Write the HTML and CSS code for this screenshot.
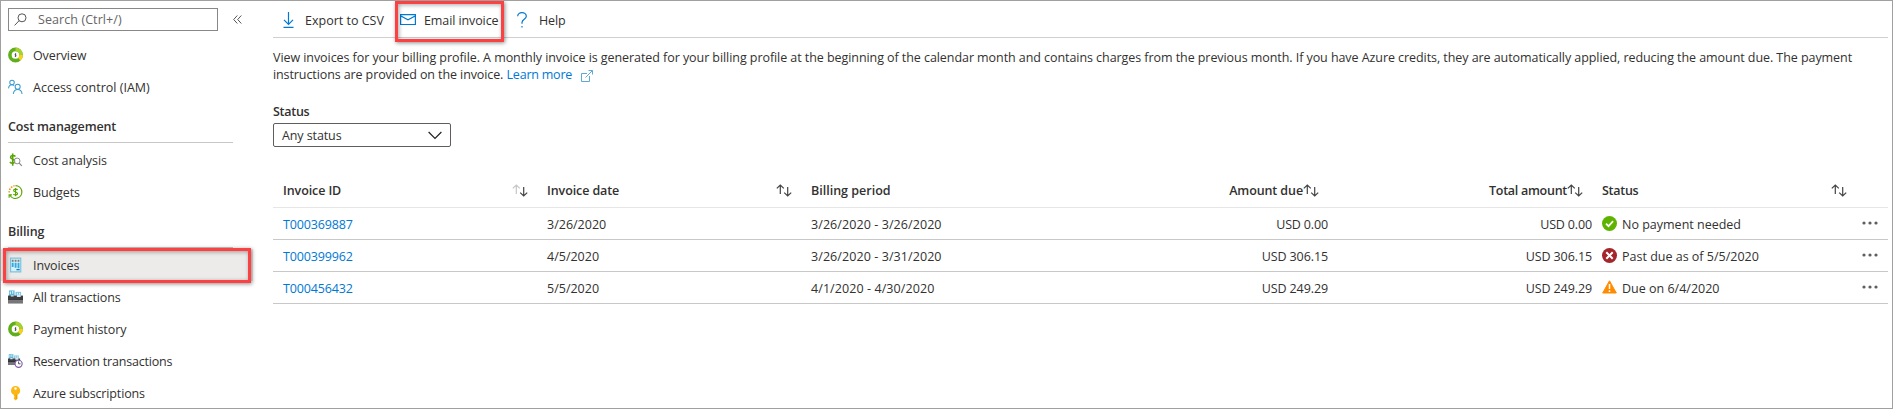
FILE: index.html
```
<!DOCTYPE html>
<html lang="en">
<head>
<meta charset="utf-8">
<title>Invoices</title>
<link rel="stylesheet" href="styles.css">
</head>
<body>
<svg class="defs" aria-hidden="true">
  <symbol id="ring" viewBox="0 0 16 16"><circle cx="8" cy="8" r="6" fill="#fff" stroke="#5fae1b" stroke-width="3.800"/><path d="M8 2A6 6 0 0 1 14 8" fill="none" stroke="#a4d22e" stroke-width="3.800"/><path d="M14 8a6 6 0 0 1-2 4.500" fill="none" stroke="#fcd116" stroke-width="3.800"/><path d="M8 6v4.200M8.900 6.900H7.600v1.200h1v1.200H7.100" fill="none" stroke="#333" stroke-width=".6"/></symbol>
  <symbol id="register" viewBox="0 0 16 16"><path d="M1 1h6v6H1z" fill="#59b4d9"/><path d="M8 2.500h6v5H8z" fill="#7cc4e4"/><path d="M2.500 2v3M5 1.500v3M10 3.500v2M12.300 3.500v2" stroke="#dff3fb" stroke-width="1.200"/><path d="M0 6.500h16V11H0z" fill="#3e3e42"/><path d="M9.500 5.500h4v2.500h-4zM3 6h3v1.500H3z" fill="#cfe9f5"/><path d="M0 11.500h16V15H0z" fill="#77777b"/><path d="M0 11h16" stroke="#242428"/></symbol>
  <symbol id="sort" viewBox="0 0 16 13"><path d="M4.300 10V1M.8 4.400 4.300 1l3.500 3.400" fill="none" stroke-width="1.200"/><path d="M11.700 3v9M8.200 8.600l3.500 3.400 3.500-3.400" fill="none" stroke="#444" stroke-width="1.200"/></symbol>
  <symbol id="dots" viewBox="0 0 16 4"><g fill="#605e5c"><circle cx="2" cy="2" r="1.600"/><circle cx="8" cy="2" r="1.600"/><circle cx="14" cy="2" r="1.600"/></g></symbol>
</svg>
<div class="frame">
  <nav class="sidebar">
    <div class="search-row">
      <div class="search">
        <svg width="13" height="13" viewBox="0 0 13 13" fill="none" stroke="#555"><circle cx="8" cy="4.800" r="4"/><path d="M5.200 7.600.6 12.400"/></svg>
        <span class="wide">Search (Ctrl+/)</span>
      </div>
      <svg class="collapse" width="9" height="9" viewBox="0 0 9 9" fill="none" stroke="#555"><path d="M4.300.5.700 4.500l3.600 4M8.300.5 4.700 4.500l3.600 4"/></svg>
    </div>
    <a class="item"><svg class="ico"><use href="#ring"/></svg><span class="snug">Overview</span></a>
    <a class="item"><svg class="ico" viewBox="0 0 16 16" fill="none" stroke="#3a9bd0" stroke-width="1.100"><circle cx="4.300" cy="3.200" r="2.400"/><path d="M.6 9.500C.8 7 2.500 5.700 4.300 5.700c1 0 1.700.3 2.300.8"/><circle cx="10.300" cy="7.700" r="2.700"/><path d="M5.700 15.500c.3-3 2.300-4.900 4.600-4.900s4.400 1.900 4.700 4.900"/></svg><span>Access control (IAM)</span></a>
    <h3 class="group"><span class="tight">Cost management</span></h3>
    <a class="item"><svg class="ico" viewBox="0 0 16 16" fill="none"><path d="M8 4.300C6.500 2.700 2.800 2.700 2.700 5c0 2.600 5 1.800 5 4.400C7.600 11.700 3.900 12 2 10.200M5 1v13" stroke="#57a300" stroke-width="1.700"/><circle cx="9.700" cy="9" r="3.100" fill="#fff" fill-opacity=".8" stroke="#888"/><path d="m12 11.300 2.700 3" stroke="#888" stroke-width="1.300"/></svg><span class="snug">Cost analysis</span></a>
    <a class="item"><svg class="ico" viewBox="0 0 16 16" fill="none"><path d="M8 1.200a6.800 6.800 0 1 1-6 10" stroke="#57a300" stroke-width="1.300"/><path d="M1.200 14v-3h3" stroke="#57a300" stroke-width="1.200"/><path d="M1.300 8.500A6.800 6.800 0 0 1 7 1.400" stroke="#ee9a1c" stroke-width="1.700" stroke-dasharray="1.600 1.200"/><path d="M10.300 5.700C9.200 4.500 6 4.600 6 6.400c0 1.900 4.200 1.200 4.200 3.200 0 1.900-3.200 1.900-4.500.6M8.100 3.600v8.800" stroke="#57a300" stroke-width="1.200"/></svg><span class="snug">Budgets</span></a>
    <h3 class="group"><span class="snug">Billing</span></h3>
    <a class="item selected"><svg class="ico" viewBox="0 0 16 16"><path d="M2.700.7h10.900v14.600H2.700z" fill="#d9f0f9" stroke="#7cc4e0" stroke-width="1.300"/><path d="M4 2.500h2v2H4zM7.100 2.500h2v2h-2zM10.200 2.500h2v2h-2z" fill="#7a7a7a"/><path d="M4 5.500h2V10H4zM7.100 5.500h2V11h-2zM10.200 5.500h2v6h-2z" fill="#32a9dc"/><path d="M9 13h3.500" stroke="#0078b8" stroke-width="1.300"/></svg><span class="snug">Invoices</span></a>
    <a class="item"><svg class="ico"><use href="#register"/></svg><span class="snug">All transactions</span></a>
    <a class="item"><svg class="ico"><use href="#ring"/></svg><span class="snug">Payment history</span></a>
    <a class="item"><svg class="ico" viewBox="0 0 16 16"><g transform="scale(.82)"><use href="#register" width="16" height="16"/></g><circle cx="11.300" cy="11" r="3.800" fill="#fff" stroke="#7d5ba6" stroke-width="1.200"/><path d="M11.300 8.500V11h2" fill="none" stroke="#444"/></svg><span class="tighter">Reservation transactions</span></a>
    <a class="item"><svg class="ico" viewBox="0 0 16 16"><path d="M8 .5a4.900 4.900 0 0 1 2.200 9.300V14l-2.200 2L6.200 14v-1l.8-.9-.8-.9V9.900A4.900 4.900 0 0 1 8 .5z" fill="#fcb714"/><circle cx="8" cy="3.200" r="1.300" fill="#fff"/><path d="M8.800 10v4.500" stroke="#e08a00" stroke-width=".7"/></svg><span class="tight">Azure subscriptions</span></a>
    <div class="mark mark-nav"></div>
  </nav>
  <main class="content">
    <div class="toolbar">
      <div class="cmd export"><svg width="12" height="16" viewBox="0 0 12 16" fill="none" stroke="#0078d4" stroke-width="1.200"><path d="M5.500 0v12M1 7.800l4.500 4.500L10 7.800M.5 15.400h10"/></svg><span>Export to CSV</span></div>
      <div class="cmd email"><svg width="16" height="12" viewBox="0 0 16 12" fill="none" stroke="#0078d4" stroke-width="1.200"><path d="M.6.6h14.800v9.900H.6zM.9 2 8 5.800 15.100 2"/></svg><span class="snug">Email invoice</span><div class="mark mark-cmd"></div></div>
      <div class="cmd help"><svg width="10" height="16" viewBox="0 0 10 16" fill="none" stroke="#0078d4" stroke-width="1.200"><path d="M.7 4.300C.7 2 2.500.7 5 .7s4.300 1.300 4.300 3.500C9.300 7.200 5 7.300 5 10.500v1.300"/><path d="M5 14v1.600"/></svg><span class="snug">Help</span></div>
    </div>
    <p class="intro"><span class="line1">View invoices for your billing profile. A monthly invoice is generated for your billing profile at the beginning of the calendar month and contains charges from the previous month. If you have Azure credits, they are automatically applied, reducing the amount due. The payment</span><br><span class="snug">instructions are provided on the invoice.</span> <a class="link learn">Learn more</a><svg class="ext" width="12" height="12" viewBox="0 0 12 12" fill="none" stroke="#5ea9d6"><path d="M6 3.500H.5v8h8V6M7.500.5h4v4M11.300.7 4.500 7.500"/></svg></p>
    <div class="label"><span class="tightest">Status</span></div>
    <div class="select"><span class="snug">Any status</span><svg width="14" height="9" viewBox="0 0 14 9" fill="none" stroke="#222" stroke-width="1.200"><path d="m.6 1 6.400 6.500L13.400 1"/></svg></div>
    <section class="grid">
      <div class="row head">
        <div class="c between"><span class="snug">Invoice ID</span><svg class="sort faded"><use href="#sort"/></svg></div>
        <div class="c between"><span class="snug">Invoice date</span><svg class="sort"><use href="#sort"/></svg></div>
        <div class="c"><span>Billing period</span></div>
        <div class="c num"><span class="snug">Amount due</span><svg class="sort"><use href="#sort"/></svg></div>
        <div class="c num"><span class="tightest">Total amount</span><svg class="sort"><use href="#sort"/></svg></div>
        <div class="c between"><span class="tightest">Status</span><svg class="sort"><use href="#sort"/></svg></div>
        <div></div>
      </div>
      <div class="row">
        <div class="c link"><span class="tight">T000369887</span></div><div class="c"><span>3/26/2020</span></div><div class="c"><span class="wide">3/26/2020 - 3/26/2020</span></div><div class="c num"><span class="tight">USD 0.00</span></div><div class="c num"><span class="tight">USD 0.00</span></div>
        <div class="c state"><svg width="15" height="15" viewBox="0 0 15 15"><circle cx="7.500" cy="7.500" r="7.500" fill="#5db300"/><path d="m4 7.700 2.500 2.500 4.600-5" fill="none" stroke="#fff" stroke-width="1.700"/></svg><span>No payment needed</span></div>
        <svg class="dots"><use href="#dots"/></svg>
      </div>
      <div class="row">
        <div class="c link"><span class="tight">T000399962</span></div><div class="c"><span>4/5/2020</span></div><div class="c"><span class="wide">3/26/2020 - 3/31/2020</span></div><div class="c num"><span class="snug">USD 306.15</span></div><div class="c num"><span class="snug">USD 306.15</span></div>
        <div class="c state"><svg width="15" height="15" viewBox="0 0 15 15"><circle cx="7.500" cy="7.500" r="7.500" fill="#a4262c"/><path d="m4.300 4.300 6.400 6.400m0-6.400-6.400 6.400" fill="none" stroke="#fff" stroke-width="2"/></svg><span>Past due as of 5/5/2020</span></div>
        <svg class="dots"><use href="#dots"/></svg>
      </div>
      <div class="row">
        <div class="c link"><span class="tight">T000456432</span></div><div class="c"><span>5/5/2020</span></div><div class="c"><span class="wide">4/1/2020 - 4/30/2020</span></div><div class="c num"><span class="snug">USD 249.29</span></div><div class="c num"><span class="snug">USD 249.29</span></div>
        <div class="c state"><svg width="15" height="15" viewBox="0 0 15 15"><path d="M7.500.8 14.300 13H.7z" fill="#ff8c00" stroke="#ff8c00" stroke-linejoin="round"/><path d="M7.500 4v5M7.500 10.300V12" stroke="#fff" stroke-width="1.500"/></svg><span>Due on 6/4/2020</span></div>
        <svg class="dots"><use href="#dots"/></svg>
      </div>
    </section>
  </main>
</div>
</body>
</html>
```
FILE: styles.css
```
* { box-sizing: border-box; }
body { margin: 0; background: #fff; color: #323130; font: 12.5px/17px "Open Sans", "Noto Sans", sans-serif; }
.defs { position: absolute; width: 0; height: 0; }
.frame { display: flex; width: 1893px; height: 409px; border: 1px solid #a0a0a0; overflow: hidden; }
span, .link { white-space: nowrap; }
svg { flex: none; display: block; }

/* letter spacing steps */
.wide { letter-spacing: .08px; }
.snug { letter-spacing: -.1px; }
.tight { letter-spacing: -.15px; }
.tighter { letter-spacing: -.19px; }
.tightest { letter-spacing: -.27px; }
.line1 { letter-spacing: -.065px; }
.learn { letter-spacing: -.22px; }

.sidebar { position: relative; width: 272px; flex: none; }
.search-row { display: flex; align-items: center; height: 38px; padding: 7px 0 8px 7px; }
.search { display: flex; align-items: center; gap: 11px; width: 210px; height: 23px; padding-left: 5px; border: 1px solid #8a8886; color: #666; }
.collapse { margin-left: 15px; }
.item { display: flex; align-items: center; gap: 10px; height: 32px; padding-left: 7px; }
.ico { width: 15px; height: 16px; }
.group { display: flex; align-items: center; width: 225px; height: 40px; margin: 0 0 1px 7px; padding-top: 7px; border-bottom: 1px solid #c8c6c4; font-size: 12.5px; font-weight: 600; }
.selected { width: 252px; background: #edebe9; }
.mark { position: absolute; border: 3px solid #fb4141; box-shadow: 1px 1px 4px rgba(0,0,0,.45), inset 1px 1px 4px rgba(0,0,0,.35); }
.mark-nav { left: 2px; top: 247px; width: 248px; height: 35px; }

.content { flex: 1; min-width: 0; }
.toolbar { display: flex; height: 37px; width: 1615px; border-bottom: 1px solid #d2d0ce; padding-left: 10px; }
.cmd { display: flex; align-items: center; position: relative; height: 36px; padding-top: 3px; }
.cmd svg { margin-top: -2px; }
.mark-cmd { left: -5px; top: 0; width: 109px; height: 41px; }
.export { width: 117px; gap: 10px; }
.email { width: 117px; gap: 8px; }
.help { gap: 12px; }
.intro { margin: 11px 0 0; line-height: 17px; height: 34px; }
.link { color: #0078d4; }
.ext { display: inline-block; margin-left: 9px; vertical-align: -3px; }
.label { margin-top: 20px; font-weight: 600; height: 17px; }
.select { display: flex; align-items: center; justify-content: space-between; width: 178px; height: 24px; margin-top: 3px; padding: 0 8px; border: 1px solid #605e5c; border-radius: 2px; }

.grid { margin-top: 27px; width: 1615px; }
.row { display: grid; grid-template-columns: 264px 264px 264px 263px 264px 270px 1fr; height: 32px; align-items: center; border-bottom: 1px solid #c8c8c8; }
.row:not(.head) span { padding-top: 1px; }
.head { height: 34px; font-weight: 600; border-color: #e6e6e6; }
.c { display: flex; align-items: center; padding-left: 10px; }
.between { justify-content: space-between; padding-right: 9px; }
.head .between:nth-child(6) { padding-right: 15px; }
.num { justify-content: flex-end; }
.head .num { padding-right: 9px; }
.sort { width: 16px; height: 13px; stroke: #444; }
.faded { stroke: #c8c6c4; }
.state { gap: 5px; }
.dots { width: 16px; height: 4px; margin-top: -2px; }
```
